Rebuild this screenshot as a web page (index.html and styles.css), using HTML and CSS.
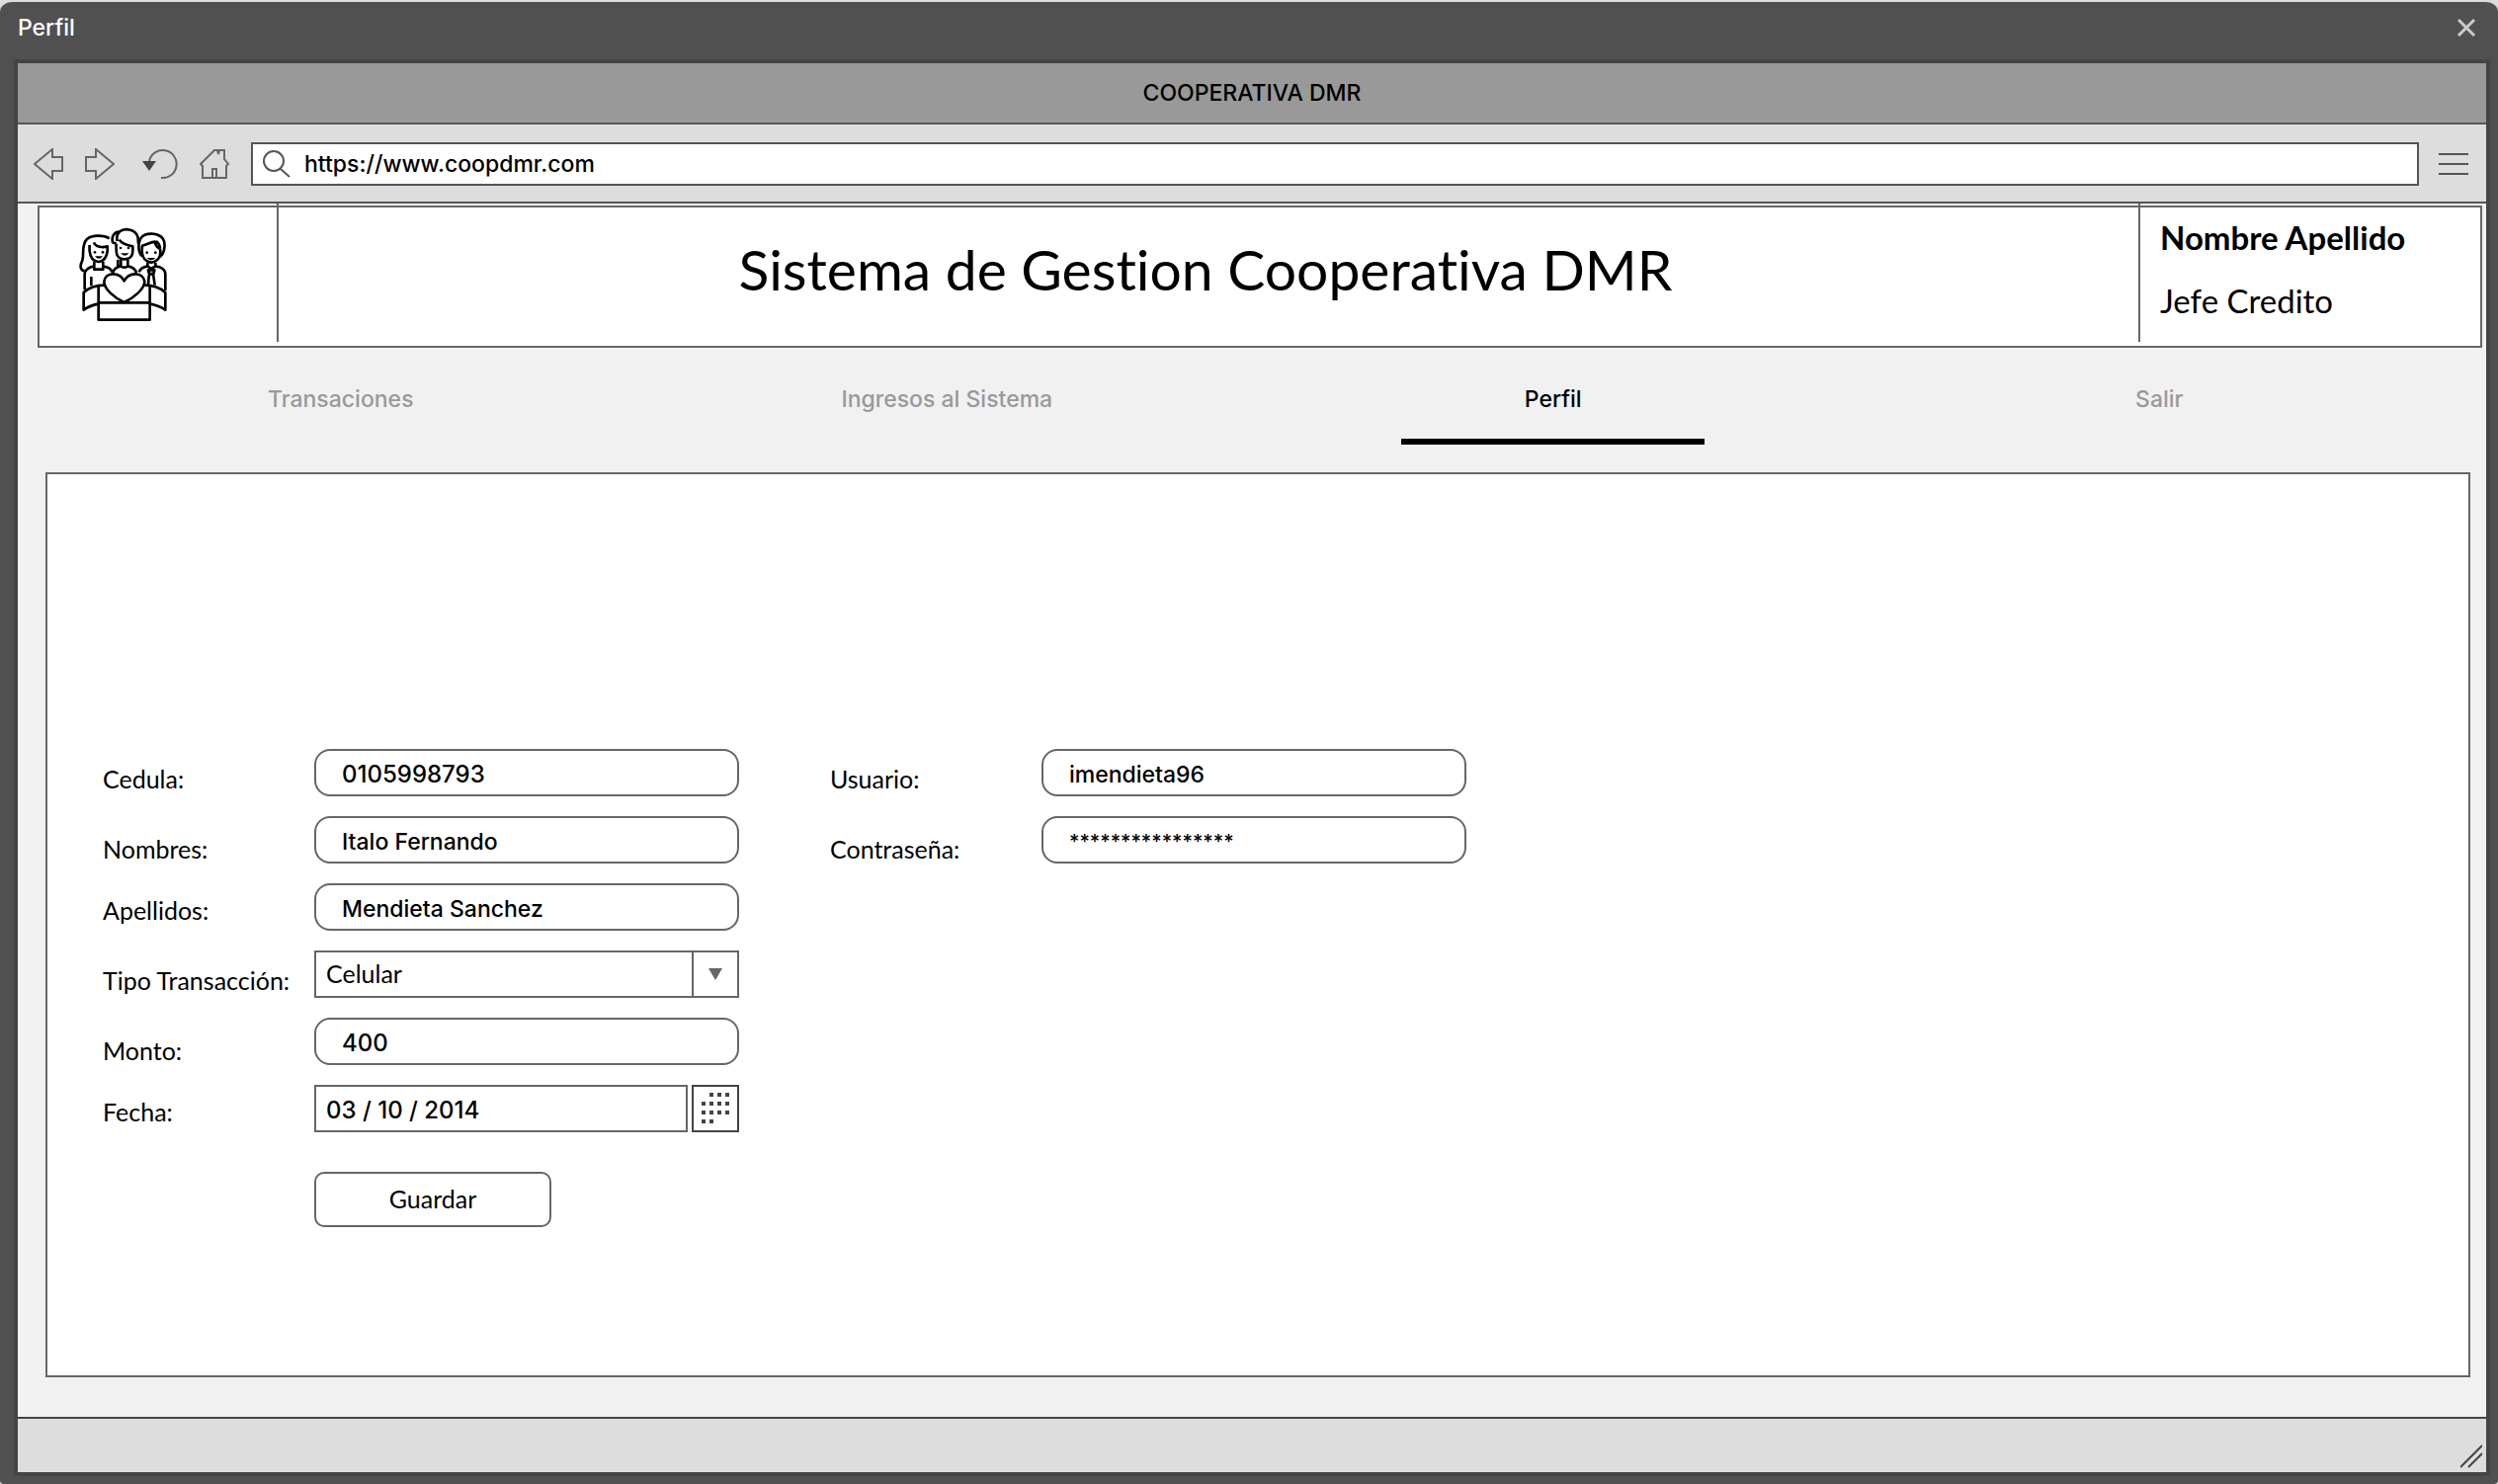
FILE: index.html
```html
<!DOCTYPE html>
<html lang="es">
<head>
<meta charset="utf-8">
<title>Perfil</title>
<link rel="stylesheet" href="styles.css">
</head>
<body>
<div class="window">
  <header class="titlebar">
    <h1 class="titlebar-text">Perfil</h1>
    <button class="icon-button" type="button" aria-label="Cerrar">
      <svg width="20" height="20" viewBox="0 0 20 20" fill="none" stroke="#ccc" stroke-width="3"><path d="M2 2L18 18M18 2L2 18"/></svg>
    </button>
  </header>

  <div class="browser">
    <div class="browser-title">COOPERATIVA DMR</div>

    <div class="toolbar">
      <nav class="toolbar-nav" aria-label="Navegador">
        <button class="icon-button" type="button" aria-label="Atrás">
          <svg width="30" height="32" viewBox="0 0 30 32" fill="none" stroke="#666" stroke-width="2"><path d="M1 16L19 1V9H29V23H19V31Z"/></svg>
        </button>
        <button class="icon-button" type="button" aria-label="Adelante">
          <svg width="30" height="32" viewBox="0 0 30 32" fill="none" stroke="#666" stroke-width="2"><path d="M29 16L11 1V9H1V23H11V31Z"/></svg>
        </button>
        <button class="icon-button" type="button" aria-label="Recargar">
          <svg width="42" height="30" viewBox="0 0 42 30" fill="none" stroke="#666" stroke-width="2"><path d="M13 12A14 14 0 1 1 25 29"/><path d="M6 12H20L13 22Z" fill="#444" stroke="none"/></svg>
        </button>
        <button class="icon-button" type="button" aria-label="Inicio">
          <svg width="32" height="30" viewBox="0 0 32 30" fill="none" stroke="#666" stroke-width="2"><path d="M3 29V17L1 15L15 1H18L19 5L20 1H25V10L29 15L27 17V29ZM13 29V20H17V29"/></svg>
        </button>
      </nav>
      <label class="address">
        <svg width="28" height="28" viewBox="0 0 28 28" fill="none" stroke="#555" stroke-width="2"><circle cx="11" cy="11" r="10"/><path d="M18 19L27 27"/></svg>
        <input class="address-input" type="text" value="https://www.coopdmr.com" aria-label="Dirección">
      </label>
      <button class="icon-button" type="button" aria-label="Menú">
        <svg width="30" height="22" viewBox="0 0 30 22" stroke="#555" stroke-width="2"><path d="M0 1H30M0 11H30M0 21H30"/></svg>
      </button>
    </div>

    <main class="page">
      <div class="masthead">
        <div class="masthead-logo">
          <svg width="90" height="96" viewBox="58 42 270 288" fill="none" stroke="#000" stroke-width="8" stroke-linejoin="round">
            <path d="M75 175C58 172 62 155 68 143C74 125 64 96 82 78C98 64 134 66 150 76"/>
            <path d="M90 96C88 125 94 145 117 147C139 145 146 122 144 100C130 105 108 102 103 88"/>
            <path d="M104 146V170H131V146M75 232V182C77 170 90 162 104 161M131 161C145 162 155 168 158 178M95 192V220"/>
            <path d="M171 92C170 120 170 138 195 139C222 138 222 120 221 100C210 98 188 93 180 80M171 92L160 88C156 70 164 57 180 56C198 42 232 48 237 74L238 92M180 57C172 64 172 74 174 84"/>
            <path d="M176 140V160M185 140V160M206 140V160M176 160H185C190 165 201 165 206 160M160 180C164 168 175 162 184 160M206 160C218 162 229 170 232 180"/>
            <path d="M250 98C246 130 254 145 277 149C300 145 308 128 304 108C296 104 290 96 288 86C274 88 264 94 250 98ZM250 130C236 120 236 86 248 72C260 58 298 58 312 76C322 90 318 122 304 132M292 84C300 90 303 96 304 106"/>
            <path d="M266 149V160L277 168L290 160V149M240 178C244 168 254 162 266 160M290 160C306 162 320 170 320 184V234M277 180L270 190L268 218M277 180L284 190L288 218M268 172H287L284 184H271Z"/>
            <path d="M195 270C165 256 134 230 134 207C136 178 180 176 195 205C210 176 254 178 257 207C256 230 225 256 195 270Z"/>
            <path d="M134 218C110 218 88 226 72 240V293C86 282 100 278 117 274M257 218C280 218 304 226 320 240V293C306 282 290 278 273 274M117 222V323H273V222M117 271H273"/>
            <g fill="#000" stroke="none"><circle cx="106" cy="118" r="4"/><circle cx="130" cy="118" r="4"/><circle cx="184" cy="105" r="4"/><circle cx="208" cy="105" r="4"/><circle cx="264" cy="119" r="4"/><circle cx="290" cy="119" r="4"/><path d="M106 130H130Q118 145 106 130ZM184 121H210Q197 135 184 121ZM264 135H290Q277 149 264 135Z"/></g>
          </svg>
        </div>
        <h2 class="masthead-title">Sistema de Gestion Cooperativa DMR</h2>
        <div class="masthead-user">
          <strong class="user-name">Nombre Apellido</strong>
          <span>Jefe Credito</span>
        </div>
      </div>

      <nav class="tabs" aria-label="Secciones">
        <a class="tab" href="#transaciones">Transaciones</a>
        <a class="tab" href="#ingresos">Ingresos al Sistema</a>
        <a class="tab tab-active" href="#perfil" aria-current="page">Perfil</a>
        <a class="tab" href="#salir">Salir</a>
      </nav>

      <form class="panel">
        <div class="fields">
          <label class="label" for="cedula">Cedula:</label>
          <input class="field field-number" id="cedula" type="text" value="0105998793">
          <label class="label label-low" for="nombres">Nombres:</label>
          <input class="field" id="nombres" type="text" value="Italo Fernando">
          <label class="label label-high" for="apellidos">Apellidos:</label>
          <input class="field" id="apellidos" type="text" value="Mendieta Sanchez">
          <label class="label" for="tipo">Tipo Transacción:</label>
          <div class="select-wrap">
            <select class="select" id="tipo"><option>Celular</option></select>
            <span class="select-arrow"><svg width="14" height="12" viewBox="0 0 14 12"><path d="M0 0H14L7 12Z" fill="#666"/></svg></span>
          </div>
          <label class="label label-low" for="monto">Monto:</label>
          <input class="field field-number" id="monto" type="text" value="400">
          <label class="label label-high" for="fecha">Fecha:</label>
          <div class="date">
            <input class="field field-number field-square" id="fecha" type="text" value="03 / 10 / 2014">
            <button class="date-button" type="button" aria-label="Abrir calendario">
              <svg width="30" height="32" viewBox="0 0 30 32" fill="none" stroke="#444" stroke-width="4" stroke-dasharray="4 4"><path d="M9 2H29M1 11H29M1 20H29M1 29H13"/></svg>
            </button>
          </div>
          <button class="save" type="submit">Guardar</button>
        </div>
        <div class="fields">
          <label class="label" for="usuario">Usuario:</label>
          <input class="field" id="usuario" type="text" value="imendieta96">
          <label class="label label-low" for="clave">Contraseña:</label>
          <input class="field field-masked" id="clave" type="text" value="****************">
        </div>
      </form>
    </main>

    <footer class="statusbar">
      <svg width="22" height="24" viewBox="0 0 22 24" fill="none" stroke="#444" stroke-width="2"><path d="M0 23L22 1M8 23L22 9"/></svg>
    </footer>
  </div>
</div>
</body>
</html>
```
FILE: styles.css
```css
* { box-sizing: border-box; }

body {
  margin: 0;
  background: #ddd;
  color: #000;
  font-family: Inter, "Liberation Sans", sans-serif;
  font-size: 23px;
  font-weight: 500;
  line-height: 32px;
  font-variant-ligatures: none;
}

h1, h2 { margin: 0; }

button, input, select {
  color: inherit;
  font: inherit;
}

svg { display: block; }

.window {
  display: flex;
  flex-direction: column;
  min-height: 100vh;
  padding: 0 8px 8px 14px;
  border-top: 2px solid #ddd;
  border-radius: 12px 12px 4px 4px;
  background: #505050;
}

.titlebar {
  display: flex;
  align-items: center;
  justify-content: space-between;
  height: 58px;
  padding: 0 14px 6px 4px;
  color: #fff;
}

.titlebar-text {
  font-size: 23px;
  font-weight: 500;
}

.icon-button {
  padding: 0;
  border: 0;
  background: none;
}

.browser {
  display: flex;
  flex: 1;
  flex-direction: column;
  border: 4px solid #444;
  background: #f1f1f1;
}

.browser-title {
  padding: 14px 0;
  background: #999;
  text-align: center;
}

.toolbar {
  display: flex;
  align-items: center;
  gap: 20px;
  height: 82px;
  padding: 2px 18px 0 16px;
  border: solid #555;
  border-width: 2px 0;
  background: #ddd;
}

.toolbar-nav {
  display: flex;
  align-items: center;
  gap: 22px;
}

.address {
  display: flex;
  flex: 1;
  align-items: center;
  gap: 14px;
  height: 44px;
  padding: 0 10px;
  border: 2px solid #555;
  background: #fff;
}

.address-input {
  flex: 1;
  padding: 0;
  border: 0;
  background: none;
}

.page {
  display: flex;
  flex: 1;
  flex-direction: column;
}

.masthead {
  display: grid;
  grid-template-columns: 240px 1fr 344px;
  margin: 2px 4px 0 20px;
  height: 144px;
  padding-bottom: 4px;
  border: 2px solid #666;
  background: #fff;
}

.masthead-logo {
  padding: 20px 40px;
}

/* The column rules run up to the toolbar's lower edge. */
.masthead-title {
  margin-top: -4px;
  padding: 28px 6px 0 0;
  border: solid #666;
  border-width: 0 2px;
  font-family: Lato, sans-serif;
  font-size: 57px;
  font-weight: 400;
  line-height: 76px;
  text-align: center;
}

.masthead-user {
  display: flex;
  flex-direction: column;
  gap: 24px;
  padding: 10px 20px;
  font-family: Lato, sans-serif;
  font-size: 33px;
  font-weight: 400;
  line-height: 40px;
}

.user-name { font-weight: 700; }

.tabs {
  display: grid;
  grid-template-columns: repeat(4, 1fr);
  margin: 0 24px 0 20px;
  height: 98px;
}

.tab {
  display: flex;
  justify-content: center;
  justify-self: center;
  width: 50%;
  padding-top: 36px;
  border-bottom: 6px solid transparent;
  color: #999;
  text-decoration: none;
  white-space: nowrap;
}

.tab-active {
  border-color: #000;
  color: #000;
}

.panel {
  display: flex;
  flex: 1;
  align-items: flex-start;
  gap: 92px;
  margin: 28px 16px 40px 28px;
  padding: 278px 56px 0;
  border: 2px solid #666;
  background: #fff;
}

.fields {
  display: grid;
  grid-template-columns: 214px 430px;
  grid-auto-rows: 48px;
  gap: 20px 0;
}

.label,
.select,
.save {
  font-family: Lato, sans-serif;
  font-size: 25px;
  font-weight: 400;
}

.label { padding-top: 14px; }
.label-low { padding-top: 17px; }
.label-high { padding-top: 11px; }

.field {
  min-width: 0;
  padding: 4px 26px 0;
  border: 2px solid #666;
  border-radius: 16px;
  background: #fff;
}

.field-number { font-size: 24px; }
.field-masked { font-size: 20px; }

.field-square {
  flex: 1;
  padding: 4px 10px 0;
  border-radius: 0;
}

.select-wrap {
  display: grid;
  grid-template-columns: 1fr 48px;
}

.select {
  grid-area: 1 / 1 / 2 / 3;
  padding: 0 10px 2px;
  border: 2px solid #666;
  border-radius: 0;
  background: #fff;
  appearance: none;
}

.select-arrow {
  display: grid;
  grid-area: 1 / 2;
  place-items: center;
  padding-right: 2px;
  border-left: 2px solid #666;
  pointer-events: none;
}

.date {
  display: flex;
  gap: 4px;
}

.date-button {
  display: grid;
  place-items: center;
  width: 48px;
  padding: 0;
  border: 2px solid #444;
  background: #fff;
}

.save {
  grid-column: 2;
  width: 240px;
  height: 56px;
  margin-top: 20px;
  padding: 0 0 2px;
  border: 2px solid #666;
  border-radius: 10px;
  background: #fff;
}

.statusbar {
  display: flex;
  align-items: flex-end;
  justify-content: flex-end;
  height: 56px;
  padding: 4px;
  border-top: 2px solid #444;
  background: #ddd;
}
```
